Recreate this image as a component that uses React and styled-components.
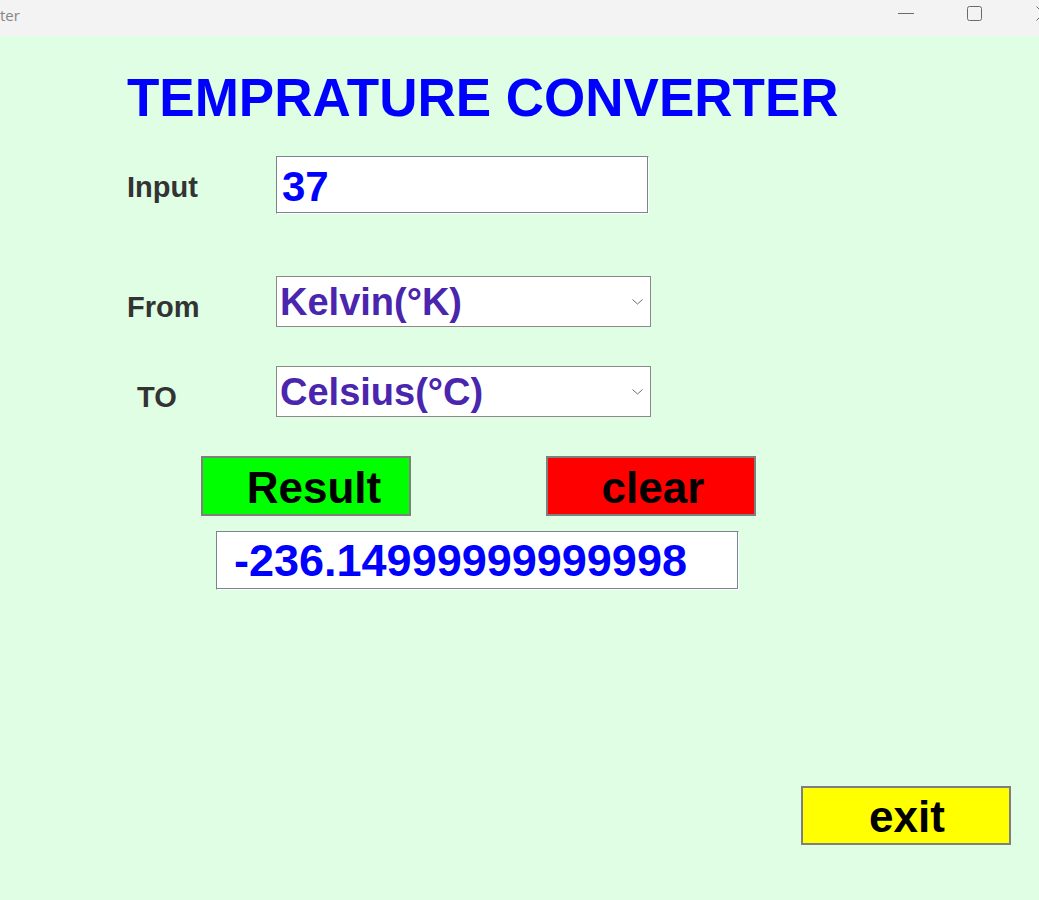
import React, { useState } from 'react'
import styled, { createGlobalStyle } from 'styled-components'

const GlobalStyle = createGlobalStyle`
  html, body {
    margin: 0;
    padding: 0;
  }
  body {
    background: #dffee4;
    font-family: "Liberation Sans", Arial, sans-serif;
  }
`

// window frame
const Window = styled.div`
  width: 1039px;
  height: 900px;
  display: flex;
  flex-direction: column;
  overflow: hidden;
  background: #dffee4;
`

const TitleBar = styled.div`
  flex: none;
  height: 36px;
  display: flex;
  align-items: flex-start;
  background: #f3f3f3;
  overflow: hidden;
`

const TitleText = styled.div`
  flex: 1;
  padding-top: 5px;
  font-family: "Open Sans", "Noto Sans", sans-serif;
  font-size: 15px;
  line-height: 20px;
  color: #858585;
`

const Controls = styled.div`
  flex: none;
  display: flex;
  margin-right: -39px;
`

const WinButton = styled.div`
  width: 69px;
  height: 36px;
  display: flex;
  justify-content: center;
  padding-top: 6px;
  box-sizing: border-box;
  color: #6a6a6a;
`

// form
const Panel = styled.main`
  flex: 1;
  display: flex;
  flex-direction: column;
  padding: 32px 28px 0 125px;
`

const Heading = styled.h1`
  margin: 0;
  padding-left: 2px;
  height: 60px;
  font-size: 53px;
  line-height: 60px;
  font-weight: bold;
  color: #0000ff;
  white-space: nowrap;
`

const FieldRow = styled.div`
  display: flex;
  align-items: flex-start;
  margin-top: ${p => p.$gap}px;
`

const Label = styled.label`
  width: 151px;
  box-sizing: border-box;
  padding-left: ${p => 2 + (p.$indent || 0)}px;
  padding-top: ${p => p.$drop || 0}px;
  height: ${p => p.$h}px;
  line-height: ${p => p.$h}px;
  font-size: 29px;
  font-weight: bold;
  color: #333333;
`

const Entry = styled.input`
  width: ${p => p.$w}px;
  height: ${p => p.$h}px;
  margin-left: ${p => p.$left || 0}px;
  box-sizing: border-box;
  padding: ${p => p.$top || 0}px 0 0 ${p => p.$pad}px;
  border: 1px solid;
  border-color: #7a8593 #ffffff #ffffff #7a8593;
  box-shadow: inset -1px -1px 0 #7a8593;
  background: #ffffff;
  font-family: "Liberation Sans", Arial, sans-serif;
  font-size: ${p => p.$size}px;
  font-weight: bold;
  color: #0000ff;
  outline: none;
`

const SelectWrap = styled.div`
  position: relative;
  width: 375px;
  height: 51px;
`

const Select = styled.select`
  width: 100%;
  height: 100%;
  box-sizing: border-box;
  appearance: none;
  border: 1px solid #8a8a8a;
  border-radius: 0;
  background: #ffffff;
  padding: 0 0 0 3px;
  font-family: "Liberation Sans", Arial, sans-serif;
  font-size: 38px;
  font-weight: bold;
  color: #4a25ad;
  outline: none;
`

const Chevron = styled.svg`
  position: absolute;
  right: 8px;
  top: 23px;
  pointer-events: none;
`

const ButtonRow = styled.div`
  display: flex;
  gap: 135px;
  margin: 39px 0 0 76px;
`

const Button = styled.button`
  width: 210px;
  height: ${p => p.$h || 60}px;
  box-sizing: border-box;
  border: 2px solid #7f7f7f;
  border-radius: 0;
  background: ${p => p.$bg};
  padding: 3px 0 0 ${p => p.$shift * 2}px;
  font-family: "Liberation Sans", Arial, sans-serif;
  font-size: 44px;
  font-weight: bold;
  color: #000000;
  cursor: pointer;
`

const Footer = styled.div`
  display: flex;
  justify-content: flex-end;
  margin-top: 196px;
`

const units = {
  K: 'Kelvin(°K)',
  C: 'Celsius(°C)',
  F: 'Fahrenheit(°F)'
}

function toKelvin (v, u) {
  if (u === 'C') return v + 273.15
  if (u === 'F') return (v - 32) * 5 / 9 + 273.15
  return v
}

function fromKelvin (k, u) {
  if (u === 'C') return k - 273.15
  if (u === 'F') return (k - 273.15) * 9 / 5 + 32
  return k
}

function Arrow () {
  return (
    <Chevron width='11' height='6' viewBox='0 0 11 6'>
      <polyline points='0.5,0.5 5.5,5 10.5,0.5' fill='none' stroke='#6e6e6e' strokeWidth='1' />
    </Chevron>
  )
}

function App () {
  const [value, setValue] = useState('37')
  const [from, setFrom] = useState('K')
  const [to, setTo] = useState('C')
  const [result, setResult] = useState('-236.14999999999998')

  const convert = () => {
    const v = parseFloat(value)
    if (isNaN(v)) return setResult('')
    setResult(String(fromKelvin(toKelvin(v, from), to)))
  }

  const clear = () => {
    setValue('')
    setResult('')
  }

  return (
    <Window>
      <GlobalStyle />
      <TitleBar>
        <TitleText>ter</TitleText>
        <Controls>
          <WinButton>
            <svg width='16' height='15' viewBox='0 0 16 15'>
              <line x1='0' y1='7.5' x2='16' y2='7.5' stroke='currentColor' strokeWidth='1' />
            </svg>
          </WinButton>
          <WinButton>
            <svg width='15' height='15' viewBox='0 0 15 15'>
              <rect x='0.5' y='0.5' width='14' height='14' rx='2' fill='none' stroke='currentColor' strokeWidth='1' />
            </svg>
          </WinButton>
          <WinButton>
            <svg width='15' height='15' viewBox='0 0 15 15'>
              <path d='M0.5 0.5 L14.5 14.5 M14.5 0.5 L0.5 14.5' stroke='currentColor' strokeWidth='1' />
            </svg>
          </WinButton>
        </Controls>
      </TitleBar>

      <Panel>
        <Heading>TEMPRATURE CONVERTER</Heading>

        <FieldRow $gap={28}>
          <Label $h={58} $drop={2}>Input</Label>
          <Entry $w={373} $h={58} $size={42} $pad={5} $top={4} value={value} onChange={e => setValue(e.target.value)} />
        </FieldRow>

        <FieldRow $gap={62}>
          <Label $h={51} $drop={6}>From</Label>
          <SelectWrap>
            <Select value={from} onChange={e => setFrom(e.target.value)}>
              {Object.keys(units).map(k => <option key={k} value={k}>{units[k]}</option>)}
            </Select>
            <Arrow />
          </SelectWrap>
        </FieldRow>

        <FieldRow $gap={39}>
          <Label $h={51} $drop={6} $indent={10}>TO</Label>
          <SelectWrap>
            <Select value={to} onChange={e => setTo(e.target.value)}>
              {Object.keys(units).map(k => <option key={k} value={k}>{units[k]}</option>)}
            </Select>
            <Arrow />
          </SelectWrap>
        </FieldRow>

        <ButtonRow>
          <Button $bg='#00ff00' $shift={8} onClick={convert}>Result</Button>
          <Button $bg='#ff0000' $shift={2} onClick={clear}>clear</Button>
        </ButtonRow>

        <FieldRow $gap={15}>
          <Entry $w={523} $h={59} $left={91} $size={45} $pad={17} readOnly value={result} />
        </FieldRow>

        <Footer>
          <Button $bg='#ffff00' $shift={1} $h={59}>exit</Button>
        </Footer>
      </Panel>
    </Window>
  )
}

export default App
